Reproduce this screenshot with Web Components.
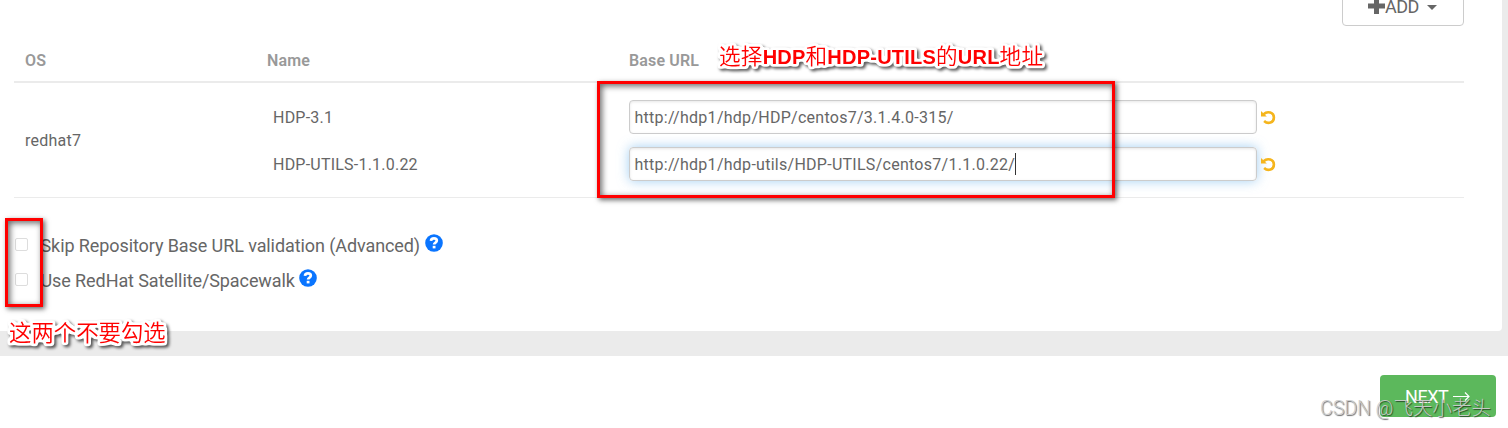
<!DOCTYPE html>
<html lang="zh"><head><meta charset="utf-8"><title>Select Version</title>
<style>html,body{margin:0;height:428px;overflow:hidden;background:#fff}body{font-family:Roboto,"Noto Sans CJK SC",sans-serif;color:#666}</style></head>
<body><repo-page></repo-page>
<script>
function define(name, html){
  const t=document.createElement('template'); t.innerHTML=html;
  customElements.define(name, class extends HTMLElement{
    constructor(){super();this.attachShadow({mode:'open'}).append(t.content.cloneNode(true));}
  });
}
define('undo-icon',`<style>:host{display:block;width:15px;height:15px}svg{display:block}</style>
<svg width="15" height="15" viewBox="0 0 15 15"><path d="M2.6 4.2C6.5.4 12.9 2.5 12.9 7.4C12.9 12.7 7 14.6 3.1 11" fill="none" stroke="#f5b51d" stroke-width="2.6"/><path d="M0 1V6.4H5.8Z" fill="#f5b51d"/></svg>`);
define('help-icon',`<style>:host{display:block;width:18px;height:18px}svg{display:block}</style>
<svg width="18" height="18" viewBox="0 0 18 18"><circle cx="9" cy="9" r="8.8" fill="#0a75ff"/><path d="M6 6.8C6.2 3.6 11.8 3.6 11.8 6.8C11.8 8.7 9.1 8.4 9.1 10.6" fill="none" stroke="#fff" stroke-width="2.7"/><path d="M7.7 11.8h2.8v2.6H7.7z" fill="#fff"/></svg>`);
define('add-button',`<style>:host{display:flex;box-sizing:border-box;width:122px;height:40px;margin-top:-14px;border:1px solid #ccc;border-radius:4px;align-items:center;padding-left:25px;font-size:18px;line-height:20px;color:#666}
svg{display:block}.t{letter-spacing:-.5px;margin:2px 0 0 0}.c{margin:2px 0 0 8px;border:5px solid transparent;border-top-color:#666;border-bottom:0}</style>
<svg width="17" height="18" viewBox="0 0 17 18"><path d="M6 1h5v5.5h6v5h-6V17H6v-5.5H0v-5h6z" fill="#666"/></svg><span class="t"><slot></slot></span><i class="c"></i>`);
define('url-field',`<style>:host{display:flex;align-items:center;height:34px}
.f{box-sizing:border-box;width:628px;height:34px;border:1px solid #ccc;border-radius:4px;padding:2px 4.5px 0;display:flex;align-items:center;font-size:16px;letter-spacing:.27px;box-shadow:inset 0 1px 3px rgba(0,0,0,.1);color:#666;white-space:nowrap}
:host([focused]) .f{box-shadow:inset 0 1px 3px rgba(0,0,0,.1),0 0 12px rgba(102,175,233,.6)}
i{display:none;width:1px;height:22px;background:#333;margin-top:-2px}:host([focused]) i{display:block}undo-icon{margin-left:4px}</style>
<div class="f"><span><slot></slot></span><i></i></div><undo-icon></undo-icon>`);
define('repo-table',`<style>:host{display:block;width:1450px;font-size:16px;line-height:20px}
.r{display:grid;grid-template-columns:242px 362px 1fr;padding-left:11px}
.h{height:45px;box-sizing:border-box;margin-top:12px;border-bottom:2px solid #ebebeb;color:#999;font-weight:600;padding-top:13px;letter-spacing:.15px}
.b{height:115px;box-sizing:border-box;border-bottom:1px solid #ebebeb;padding-top:17px;align-items:start}
.n,.u{display:grid;grid-template-rows:34px 34px;gap:13px;align-items:center}.n{padding-left:6px;letter-spacing:.22px}.n span{padding-top:2px}.os{margin-top:31px;letter-spacing:.25px}</style>
<div class="r h"><span>OS</span><span>Name</span><span>Base URL</span></div>
<div class="r b"><span class="os">redhat7</span><div class="n"><span>HDP-3.1</span><span>HDP-UTILS-1.1.0.22</span></div>
<div class="u"><url-field>http://hdp1/hdp/HDP/centos7/3.1.4.0-315/</url-field><url-field focused>http://hdp1/hdp-utils/HDP-UTILS/centos7/1.1.0.22/</url-field></div></div>`);
define('check-option',`<style>:host{display:flex;align-items:center;height:35px;font-size:18px;line-height:24px;letter-spacing:-.09px}
b{box-sizing:border-box;width:13px;height:13px;border:1px solid #ddd;border-radius:2px;margin:-3px 12.5px 0 15px}help-icon{margin:-5px 0 0 4.5px}</style><b></b><span><slot></slot></span><help-icon></help-icon>`);
define('next-button',`<style>:host{display:flex;box-sizing:border-box;width:116px;height:42px;background:#5cb85c;border-radius:4px;color:#fff;font-size:18px;align-items:center;padding-left:25px}
span{letter-spacing:-.45px}svg{margin-left:5px}</style><span><slot></slot></span><svg width="18" height="12" viewBox="0 0 18 12"><path d="M0 6.5H16M12 2.5l4 4-4 4" fill="none" stroke="#fff" stroke-width="1.2"/></svg>`);
define('mark-box',`<style>:host{display:block;position:absolute;box-sizing:border-box;border:3px solid #f00;box-shadow:2px 2px 5px rgba(0,0,0,.6),inset 2px 2px 6px rgba(0,0,0,.6)}</style>`);
define('mark-note',`<style>:host{display:block;position:absolute;white-space:nowrap;color:#f00;font:350 21.6px/28px "Liberation Sans","Noto Sans CJK SC",sans-serif}
span{filter:url(#halo) drop-shadow(2px 2px 1.5px rgba(0,0,0,.65));display:block}svg{position:absolute}</style>
<svg width="0" height="0"><filter id="halo" x="-10%" y="-40%" width="120%" height="180%" color-interpolation-filters="sRGB"><feMorphology in="SourceAlpha" operator="dilate" radius="2"/><feGaussianBlur stdDeviation="1.2"/><feComponentTransfer><feFuncA type="linear" slope="4" intercept="-.6"/></feComponentTransfer><feColorMatrix values="0 0 0 0 1  0 0 0 0 1  0 0 0 0 1  0 0 0 1 0" result="w"/><feMerge><feMergeNode in="w"/><feMergeNode in="SourceGraphic"/></feMerge></filter></svg><span><slot></slot></span>`);
define('repo-page',`<style>:host{display:block;position:relative;width:1508px;height:428px;overflow:hidden}
.bg{background:#ebebeb;height:356px}.p{box-sizing:border-box;background:#fff;width:1502px;height:331px;border-radius:0 0 4px 0;padding-left:14px;overflow:hidden}
.top{display:flex;justify-content:flex-end;width:1450px}.opts{margin:30px 0 0 -14px}.foot{display:flex;justify-content:flex-end;padding:19px 12px 0 0}
.one{left:597px;top:81px;width:518px;height:117px}.two{left:5px;top:218px;width:38px;height:89px}
.n1{left:719px;top:43px;letter-spacing:.22px}.n1 b{font-size:20px}.n2{left:9px;top:320px;font-size:22.4px}
.wm{position:absolute;left:1320px;top:396px;font:300 19.5px/26px Roboto,"Noto Sans CJK SC",sans-serif;color:rgba(205,205,205,.95);white-space:nowrap;text-shadow:1px 1px 1px rgba(0,0,0,.6)}</style>
<div class="bg"><div class="p"><div class="top"><add-button>ADD</add-button></div><repo-table></repo-table>
<div class="opts"><check-option>Skip Repository Base URL validation (Advanced)</check-option><check-option>Use RedHat Satellite/Spacewalk</check-option></div></div></div>
<div class="foot"><next-button>NEXT</next-button></div>
<mark-box class="one"></mark-box><mark-box class="two"></mark-box>
<mark-note class="n1">选择<b>HDP</b>和<b>HDP-UTILS</b>的<b>URL</b>地址</mark-note><mark-note class="n2">这两个不要勾选</mark-note><div class="wm">CSDN @飞天小老头</div>`);
</script></body></html>
